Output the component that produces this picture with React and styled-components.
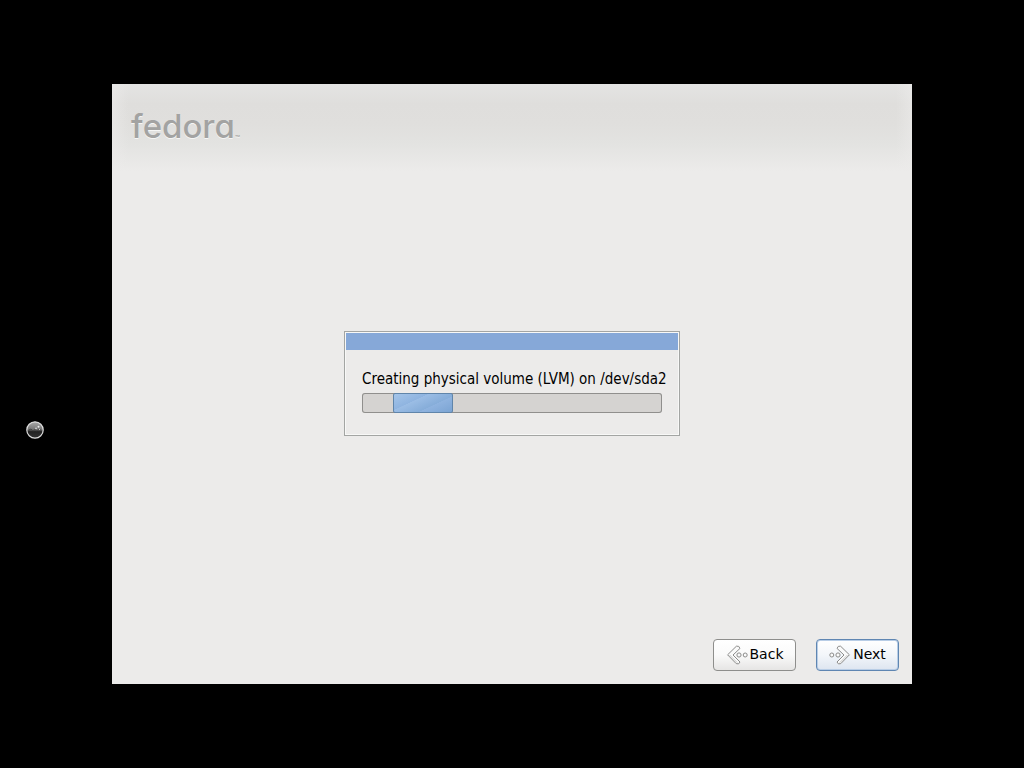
import styled, { createGlobalStyle } from 'styled-components';
import { useState } from 'react';

const GlobalStyle = createGlobalStyle`
    * {
        box-sizing: border-box;
    }

    body {
        margin: 0;
        background-color: #000;
        color: #000;
        font-family: 'DejaVu Sans', sans-serif;
        font-size: 14px;
        line-height: 16px;
    }
`

const Screen = styled.div`
    position: relative;
    display: flex;
    min-height: 100vh;
    padding: 84px 112px;
`

const Installer = styled.main`
    position: relative;
    flex: 1;
    display: flex;
    flex-direction: column;
    justify-content: space-between;
    background-color: #ecebea;
`

const Header = styled.header`
    padding: 22px 19px 25px;
    background:
        linear-gradient(90deg, #ecebea99 0, #ecebea00 16px, #ecebea00 calc(100% - 16px), #ecebea99 100%),
        linear-gradient(#e4e4e3 0, #dfdedc 20px, #e0dfdd 40px, #e3e3e1 60px, #ecebea 100%);
`

const Brand = styled.h1`
    display: flex;
    align-items: flex-end;
    margin: 0;
    color: #a3a3a2;
    font-family: 'Inter', sans-serif;
    font-feature-settings: 'cv11';
    font-weight: 500;
    font-size: 33px;
    line-height: 40px;
    text-shadow: 0 1px 0 #f6f6f5;
`

const Trademark = styled.span`
    font-size: 8px;
    line-height: 16px;
`

const Overlay = styled.div`
    position: absolute;
    inset: 0;
    display: flex;
    align-items: center;
    justify-content: center;
    padding-bottom: 1px;
    pointer-events: none;
`

const Dialog = styled.section`
    padding: 1px;
    border: 1px solid #a3a5a3;
    background-color: #ecebea;
    box-shadow: inset 0 0 0 1px #f8f8f7;
`

const TitleBar = styled.div`
    height: 17px;
    background-color: #86a8d8;
`

const DialogBody = styled.div`
    display: flex;
    flex-direction: column;
    gap: 6px;
    width: 332px;
    padding: 21px 16px;
`

const Task = styled.div`
    font-family: 'DejaVu Sans Condensed', 'DejaVu Sans', sans-serif;
    font-size: 15px;
    white-space: nowrap;
`

const Track = styled.div`
    display: flex;
    height: 20px;
    border-radius: 3px;
    background-color: #d5d3d1;
    box-shadow: inset 0 0 0 1px #908f8d;
`

const Pulse = styled.div`
    border: 1px solid #6085aa;
    border-radius: 2px;
    background: linear-gradient(155deg, #a5c5e9 0, #8fb4e0 35%, #9bbde5 36%, #86add9 65%, #8fb3df 66%, #7ba4d3 100%);
`

const Footer = styled.footer`
    display: flex;
    justify-content: flex-end;
    gap: 20px;
    padding: 13px;
`

const Button = styled.button`
    display: flex;
    align-items: center;
    justify-content: center;
    gap: 2px;
    width: 83px;
    height: 32px;
    padding: 0 0 2px;
    border: 1px solid ${props => props.$primary ? '#5f86b2' : '#8e8e8c'};
    border-radius: 4px;
    background: ${props => props.$primary
        ? 'linear-gradient(#fff 0, #f3f6fa 50%, #dde5f0 100%)'
        : 'linear-gradient(#fff 0, #fafafa 50%, #e6e5e4 100%)'};
    box-shadow: ${props => props.$primary ? 'inset 0 0 0 1px #b8cde6' : 'none'};
    color: #000;
    font: inherit;
    cursor: pointer;
`

const Arrow = styled.svg`
    flex: none;
    width: 22px;
    height: 20px;
    margin-top: 2px;
`

const Pointer = styled.svg`
    position: absolute;
    left: 25px;
    top: 420px;
    width: 20px;
    height: 20px;
`

function ArrowIcon({flip}) {
    return (
        <Arrow viewBox="0 0 22 20" fill="#fafafa" stroke="#8b8b8a" strokeWidth="1" strokeLinejoin="round" aria-hidden="true">
            <g transform={flip ? 'translate(21 0) scale(-1 1)' : 'translate(1 0)'}>
                <path d="M9.4 1.2 L0.6 9.8 L9.2 18.6 Q12 20 13 17 L6 10 L13 3.4 Q12.2 0.4 9.4 1.2 Z" />
                <path d="M10.2 17.6 L2.6 10" stroke="#c9c9c8" fill="none" />
                <circle cx="12" cy="10" r="2.1" />
                <circle cx="18.2" cy="10" r="2" />
            </g>
        </Arrow>
    );
}

function BallPointer() {
    return (
        <Pointer viewBox="0 0 20 20" aria-hidden="true">
            <defs>
                <linearGradient id="ball" x1="0" y1="0" x2="0" y2="1">
                    <stop offset="0" stopColor="#aaa" />
                    <stop offset="0.45" stopColor="#777" />
                    <stop offset="0.6" stopColor="#222" />
                    <stop offset="1" stopColor="#333" />
                </linearGradient>
            </defs>
            <circle cx="10" cy="10" r="8.2" fill="url(#ball)" stroke="#ddd" strokeWidth="1.2" />
            <path d="M4 10 L6 9 L8 11 L10 9.5 L12 11 L14 9 L16 10" fill="none" stroke="#444" />
            <circle cx="13.5" cy="6.8" r="1" fill="#eee" />
            <circle cx="11" cy="8.4" r="0.8" fill="#ddd" />
            <circle cx="14.5" cy="9.4" r="0.7" fill="#ccc" />
        </Pointer>
    );
}

function App() {
    const [ pulse ] = useState({ start: 31, size: 60, total: 300 })
    const percent = value => `${value / pulse.total * 100}%`

    return (
        <>
            <GlobalStyle />
            <Screen>
                <Installer>
                    <Header>
                        <Brand>fedora<Trademark>™</Trademark></Brand>
                    </Header>

                    <Overlay>
                        <Dialog role="dialog" aria-labelledby="task">
                            <TitleBar />
                            <DialogBody>
                                <Task id="task">Creating physical volume (LVM) on /dev/sda2</Task>
                                <Track role="progressbar" aria-labelledby="task">
                                    <Pulse style={{marginLeft: percent(pulse.start), width: percent(pulse.size)}} />
                                </Track>
                            </DialogBody>
                        </Dialog>
                    </Overlay>

                    <Footer>
                        <Button type="button"><ArrowIcon />Back</Button>
                        <Button type="button" $primary><ArrowIcon flip />Next</Button>
                    </Footer>
                </Installer>
                <BallPointer />
            </Screen>
        </>
    );
}

export default App;
